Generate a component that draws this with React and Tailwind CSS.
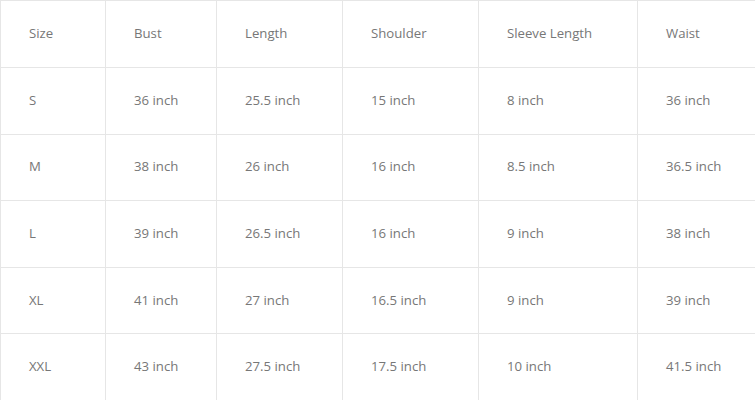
const headers = ['Size', 'Bust', 'Length', 'Shoulder', 'Sleeve Length', 'Waist']

const rows = [
  ['S', '36 inch', '25.5 inch', '15 inch', '8 inch', '36 inch'],
  ['M', '38 inch', '26 inch', '16 inch', '8.5 inch', '36.5 inch'],
  ['L', '39 inch', '26.5 inch', '16 inch', '9 inch', '38 inch'],
  ['XL', '41 inch', '27 inch', '16.5 inch', '9 inch', '39 inch'],
  ['XXL', '43 inch', '27.5 inch', '17.5 inch', '10 inch', '41.5 inch'],
]

const widths = ['w-[105px]', 'w-[111px]', 'w-[126px]', 'w-[136px]', 'w-[159px]', 'w-[118px]']

export default function App() {
  return (
    <div className="w-[755px] h-[400px] bg-white font-['Open_Sans',sans-serif] text-[13.2px] text-[#777]">
      <table className="w-[755px] h-[400px] border-collapse table-fixed">
        <thead>
          <tr className="h-[67px]">
            {headers.map((h, i) => (
              <th key={h} className={`${widths[i]} border border-[#e6e6e6] pl-[28px] text-left font-normal`}>
                {h}
              </th>
            ))}
          </tr>
        </thead>
        <tbody>
          {rows.map((row) => (
            <tr key={row[0]} className="h-[66.6px]">
              {row.map((cell, i) => (
                <td key={i} className="border border-[#e6e6e6] pl-[28px] text-left">
                  {cell}
                </td>
              ))}
            </tr>
          ))}
        </tbody>
      </table>
    </div>
  )
}
